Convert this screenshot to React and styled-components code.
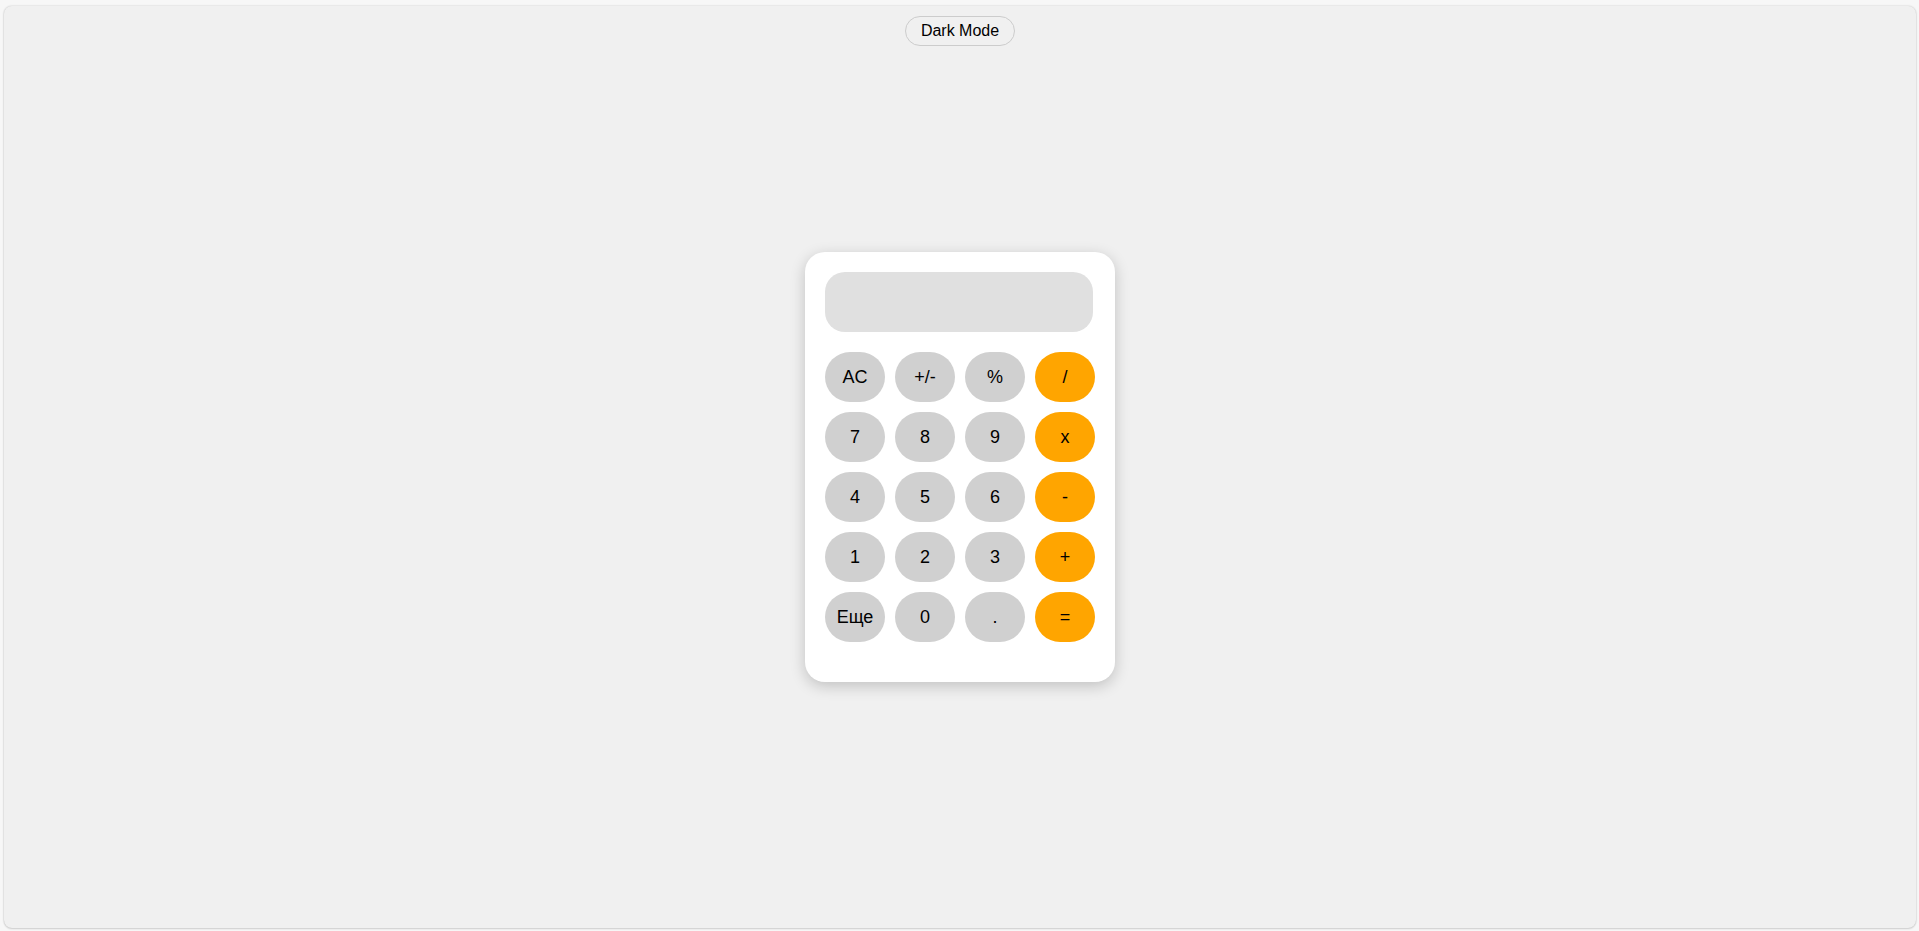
import React, { useState } from "react";
import styled, { createGlobalStyle } from "styled-components";

const GlobalStyle = createGlobalStyle`
  * { box-sizing: border-box; }
  body {
    margin: 0;
    background: #f7f7f7;
    font-family: Arial, "Liberation Sans", sans-serif;
    overflow: hidden;
  }
`;

const Frame = styled.div`
  height: 100vh;
  padding: 6px 3px 3px 4px;
  display: flex;
`;

const Page = styled.main`
  position: relative;
  flex: 1;
  display: flex;
  align-items: center;
  justify-content: center;
  border-radius: 8px;
  background: ${(p) => (p.$dark ? "#222" : "#f0f0f0")};
  box-shadow: 0 0 2px rgba(0, 0, 0, 0.2), 0 1px 2px rgba(0, 0, 0, 0.12);
`;

const ThemeToggle = styled.button`
  position: absolute;
  top: 10px;
  left: 50%;
  transform: translateX(-50%);
  width: 110px;
  height: 30px;
  padding: 0;
  border: 1px solid #ccc;
  border-radius: 15px;
  background: #f0f0f0;
  color: #000;
  font: 16px Arial, "Liberation Sans", sans-serif;
  cursor: pointer;
`;

const Calculator = styled.section`
  width: 310px;
  padding: 20px 20px 40px;
  border-radius: 20px;
  background: ${(p) => (p.$dark ? "#333" : "#fff")};
  box-shadow: 0 4px 15px rgba(0, 0, 0, 0.2);
`;

const Display = styled.div`
  width: 268px;
  height: 60px;
  margin-bottom: 20px;
  padding: 0 20px;
  border-radius: 20px;
  background: #e0e0e0;
  font-size: 32px;
  line-height: 60px;
  text-align: right;
  overflow: hidden;
`;

const Keypad = styled.div`
  display: grid;
  grid-template-columns: repeat(4, 60px);
  grid-auto-rows: 50px;
  gap: 10px;
`;

const Key = styled.button`
  padding: 0;
  border: none;
  border-radius: 25px;
  background: ${(p) => (p.$operator ? "#ffa500" : "#d0d0d0")};
  color: #000;
  font: 18px Arial, "Liberation Sans", sans-serif;
  cursor: pointer;
`;

const keys = [
  "AC", "+/-", "%", "/",
  "7", "8", "9", "x",
  "4", "5", "6", "-",
  "1", "2", "3", "+",
  "Еще", "0", ".", "=",
];
const operators = ["/", "x", "-", "+", "="];

export default function App() {
  const [dark, setDark] = useState(false);
  const [value, setValue] = useState("");

  const press = (key) => {
    if (key === "AC") setValue("");
    else if (/^[0-9.]$/.test(key)) setValue((v) => v + key);
  };

  return (
    <>
      <GlobalStyle />
      <Frame>
        <Page $dark={dark}>
          <ThemeToggle onClick={() => setDark(!dark)}>
            {dark ? "Light Mode" : "Dark Mode"}
          </ThemeToggle>
          <Calculator $dark={dark}>
            <Display>{value}</Display>
            <Keypad>
              {keys.map((key) => (
                <Key key={key} $operator={operators.includes(key)} onClick={() => press(key)}>
                  {key}
                </Key>
              ))}
            </Keypad>
          </Calculator>
        </Page>
      </Frame>
    </>
  );
}
